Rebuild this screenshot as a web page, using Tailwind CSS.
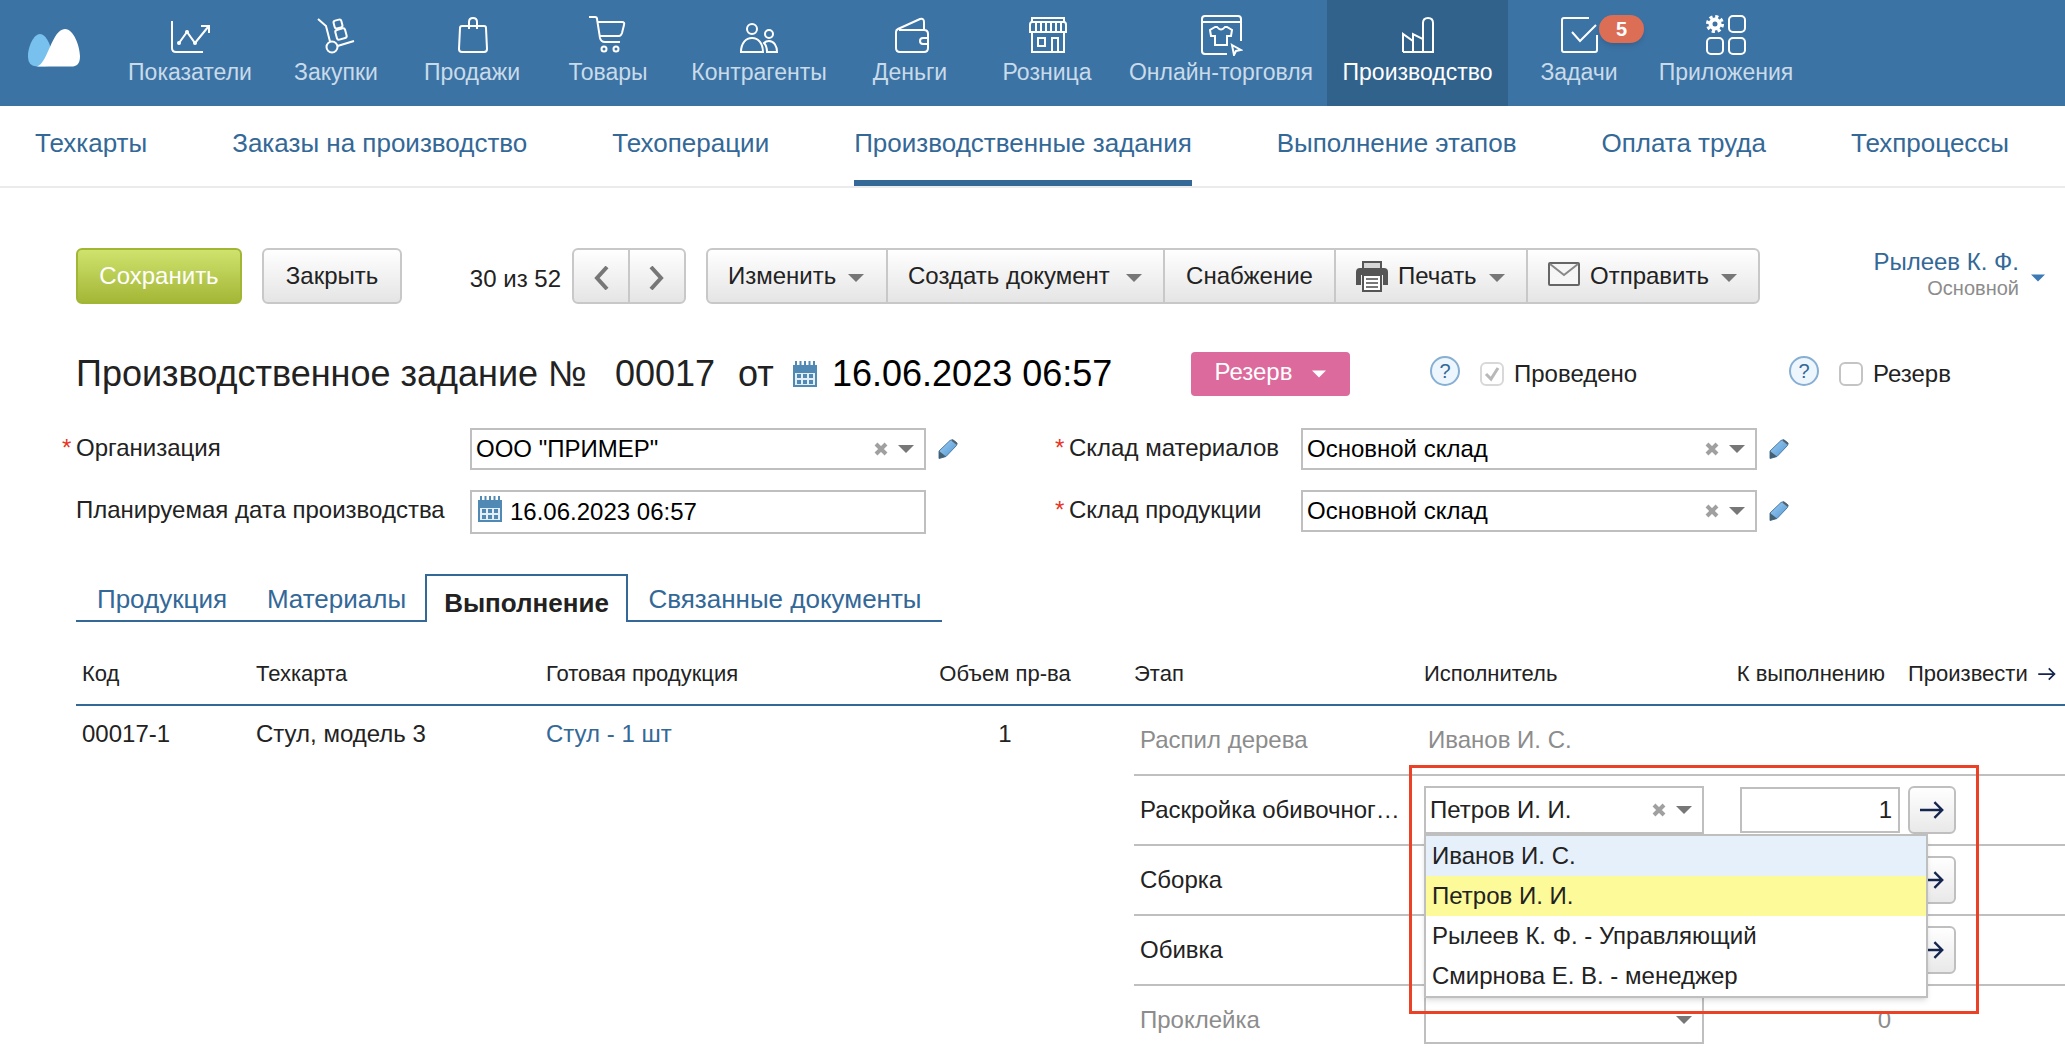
<!DOCTYPE html>
<html lang="ru">
<head>
<meta charset="utf-8">
<meta name="viewport" content="width=device-width, initial-scale=1">
<title>Производственное задание № 00017</title>
<script src="https://cdn.jsdelivr.net/npm/@tailwindcss/browser@4"></script>
</head>
<body class="bg-white font-['Liberation_Sans',Arial,sans-serif] text-2xl leading-7 text-[#222222] overflow-x-hidden">

<svg class="absolute h-0 w-0" aria-hidden="true">
  <defs>
  <linearGradient id="pencil-fill" x1="0" y1="0" x2="1" y2="1"><stop offset="0" stop-color="#9fd0f5"/><stop offset="1" stop-color="#4d92cf"/></linearGradient>
  </defs>
  <symbol id="arrow-down" viewBox="0 0 16 8"><path d="M0 0h16L8 8z" fill="currentColor"/></symbol>
  <symbol id="cross" viewBox="0 0 14 14"><path d="M2 2l10 10M12 2L2 12" stroke="#a0a0a0" stroke-width="4" fill="none"/></symbol>
  <symbol id="calendar" viewBox="0 0 24 26"><path d="M3 0v5M7.500 0v5M12 0v5M16.500 0v5M21 0v5" stroke="#5089b4" stroke-width="2"/><path d="M0 4h24v22H0z" fill="#5089b4"/><path d="M2 12h20v12H2z" fill="#e4eef6"/><path d="M4 13h4v4H4zm6 0h4v4h-4zm6 0h4v4h-4zM4 19h4v4H4zm6 0h4v4h-4zm6 0h4v4h-4z" fill="#5089b4"/></symbol>
  <symbol id="pencil" viewBox="0 0 20 20"><path d="M1 12L12 1.500q1.500-1 3-.5l3.500 2.500q1 1.500 0 3L8 17.500l-7 2z" fill="url(#pencil-fill)" stroke="#4a7ba5" stroke-width="1"/><path d="M1 12l7 5.500-7 2z" fill="#47606f"/><path d="M14 1l5 4" stroke="#55616b" stroke-width="2"/></symbol>
  <symbol id="arrow-right" viewBox="0 0 20 16"><path d="M0 8h18M12 1.500L18.500 8 12 14.500" fill="none" stroke="#14264f" stroke-width="2"/></symbol>
</svg>

<header class="flex h-[106px] items-stretch bg-[#3c73a5] text-[23px] leading-8 text-[#c9dbe9]">
  <a href="#" class="flex w-[113px] items-start pl-7 pt-7" aria-label="Главная">
    <svg class="h-10 w-[52px]" viewBox="0 0 52 40"><path d="M0 29C0 18 6 6 12 6s12 12 12 23-4 9-10 9.500H9Q0 38 0 29z" fill="#78c1ee"/><path d="M9 38.500C20 35 24 1 37 1c9 0 15 18 15 27 0 8-3 10.500-9 10.500z" fill="#fff"/></svg>
  </a>
  <nav class="flex text-center">
    <a href="#" class="flex w-[154px] flex-col items-center pt-3">
      <svg class="h-11 w-11" viewBox="0 0 44 44" fill="none" stroke="#fff" stroke-width="2"><path d="M4 9v27q0 4 4 4h27M11 31l8-11 8 11L40 15M33 14h8v7"/><g fill="#fff" stroke="none"><circle cx="11" cy="31" r="2"/><circle cx="19" cy="20" r="2"/><circle cx="27" cy="31" r="2"/></g></svg>
      Показатели</a>
    <a href="#" class="flex w-[138px] flex-col items-center pt-3">
      <svg class="h-11 w-11" viewBox="0 0 44 44" fill="none" stroke="#fff" stroke-width="2"><path d="M4 7l8 7 4 15.500M23.500 34l16.500-5"/><circle cx="18" cy="35" r="5.500"/><rect x="20" y="8" width="8" height="8" rx="2" transform="rotate(-15 24 12)"/><rect x="22" y="17" width="10" height="10" rx="2" transform="rotate(-15 27 22)"/></svg>
      Закупки</a>
    <a href="#" class="flex w-[134px] flex-col items-center pt-3">
      <svg class="h-11 w-11" viewBox="0 0 44 44" fill="none" stroke="#fff" stroke-width="2"><path d="M12 14h22q2 0 2 2l1 21q0 3-3 3H12q-3 0-3-3l1-21q0-2 2-2zM19 17v-7q0-4 4-4t4 4v7"/></svg>
      Продажи</a>
    <a href="#" class="flex w-[138px] flex-col items-center pt-3">
      <svg class="h-11 w-11" viewBox="0 0 44 44" fill="none" stroke="#fff" stroke-width="2"><path d="M3 5h6q2 0 2 2l3 19q1 4 5 4h15M12 10h24q3 0 2 3l-2 8q-1 3-3 3H14"/><circle cx="18" cy="37" r="2.500"/><circle cx="30" cy="37" r="2.500"/></svg>
      Товары</a>
    <a href="#" class="flex w-[164px] flex-col items-center pt-3">
      <svg class="h-11 w-11" viewBox="0 0 44 44" fill="none" stroke="#fff" stroke-width="2"><circle cx="15" cy="17" r="5"/><circle cx="32" cy="22" r="4"/><path d="M4 40c0-9 5-14 11-14s11 5 11 14zM30 40c0-4-1-7-3-9 1-1 3-2 5-2 5 0 8 5 8 11z"/></svg>
      Контрагенты</a>
    <a href="#" class="flex w-[138px] flex-col items-center pt-3">
      <svg class="h-11 w-11" viewBox="0 0 44 44" fill="none" stroke="#fff" stroke-width="2"><path d="M11 18h25q4 0 4 4v14q0 4-4 4H12q-4 0-4-4V20q0-2 2-3L32 7q4-1 4 3v8M40 26h-5q-3 0-3 3t3 3h5"/></svg>
      Деньги</a>
    <a href="#" class="flex w-[136px] flex-col items-center pt-3">
      <svg class="h-11 w-11" viewBox="0 0 44 44" fill="none" stroke="#fff" stroke-width="2"><path d="M7 10V6h32v4M5 20v-7q0-3 2-3h32q2 0 2 3v7zM7 20v20h32V20M11 10v10M16 10v10M21 10v10M26 10v10M31 10v10M36 10v10M13 26h7v8h-7zM27 40V26h6v14"/></svg>
      Розница</a>
    <a href="#" class="flex w-[212px] flex-col items-center pt-3">
      <svg class="h-11 w-11" viewBox="0 0 44 44" fill="none" stroke="#fff" stroke-width="2"><path d="M28 42H6q-3 0-3-3V7q0-3 3-3h33q3 0 3 3v22M3 10h39M16 15l-5 3 1 6h4v9h12v-9h4l1-6-5-3h-2q-4 5-8 0zM33 33l9 5-5 1-2 4z"/></svg>
      Онлайн-торговля</a>
    <a href="#" class="flex w-[181px] flex-col items-center bg-[#31628c] pt-3 text-white" aria-current="page">
      <svg class="h-11 w-11" viewBox="0 0 44 44" fill="none" stroke="#fff" stroke-width="2"><path d="M7 40V22l10 7v-7l10 5v13M17 40V22M7 40h30V11q0-5-5-5t-5 5v29"/></svg>
      Производство</a>
    <a href="#" class="relative flex w-[142px] flex-col items-center pt-3">
      <svg class="h-11 w-11" viewBox="0 0 44 44" fill="none" stroke="#fff" stroke-width="2"><path d="M32 6H7q-2 0-2 2v30q0 2 2 2h31q2 0 2-2V23M15 20l8 9L39 13"/></svg>
      Задачи
      <span class="absolute left-[91px] top-[15px] flex h-7 w-[45px] items-center justify-center rounded-full bg-[#dd6e56] text-xl font-bold text-white shadow-md">5</span></a>
    <a href="#" class="flex w-[152px] flex-col items-center pt-3">
      <svg class="h-11 w-11" viewBox="0 0 44 44" fill="none" stroke="#fff" stroke-width="2"><rect x="25" y="4" width="16" height="16" rx="4"/><rect x="3" y="26" width="16" height="16" rx="4"/><rect x="25" y="26" width="16" height="16" rx="4"/><circle cx="11" cy="12" r="4.500" stroke-width="4"/><circle cx="11" cy="12" r="7.500" stroke-width="3" stroke-dasharray="3.200 2.690"/></svg>
      Приложения</a>
  </nav>
</header>

<nav class="flex h-[82px] items-stretch gap-[85px] whitespace-nowrap border-b-2 border-[#ebebeb] pl-[35px] text-[26px] leading-8 text-[#336897]">
  <a href="#" class="pt-[21px]">Техкарты</a>
  <a href="#" class="pt-[21px]">Заказы на производство</a>
  <a href="#" class="pt-[21px]">Техоперации</a>
  <a href="#" class="border-b-[6px] border-[#336897] pt-[21px]" aria-current="page">Производственные задания</a>
  <a href="#" class="pt-[21px]">Выполнение этапов</a>
  <a href="#" class="pt-[21px]">Оплата труда</a>
  <a href="#" class="pt-[21px]">Техпроцессы</a>
</nav>

<main class="pl-[76px] pt-[60px]">
  <div class="flex h-14 items-stretch whitespace-nowrap">
    <button class="w-[166px] rounded-md border-2 border-[#a2b636] bg-linear-to-b from-[#cfe26c] to-[#a4b736] text-white">Сохранить</button>
    <button class="ml-5 w-[140px] rounded-md border-2 border-[#c8c8c8] bg-linear-to-b from-white to-[#e5e5e5]">Закрыть</button>
    <span class="flex w-[170px] items-center justify-end pr-[11px] pt-1.5">30 из 52</span>
    <div class="flex w-[114px] rounded-md border-2 border-[#c8c8c8] bg-linear-to-b from-white to-[#e5e5e5]">
      <button class="flex flex-1 items-center justify-center border-r-2 border-[#c8c8c8] pt-1" aria-label="Предыдущий"><svg class="h-6 w-4" viewBox="0 0 16 24" fill="none" stroke="#777" stroke-width="4"><path d="M14 1L4 12l10 11"/></svg></button>
      <button class="flex flex-1 items-center justify-center pt-1" aria-label="Следующий"><svg class="h-6 w-4" viewBox="0 0 16 24" fill="none" stroke="#777" stroke-width="4"><path d="M2 1l10 11L2 23"/></svg></button>
    </div>
    <div class="ml-5 flex rounded-md border-2 border-[#c8c8c8] bg-linear-to-b from-white to-[#e5e5e5]">
      <button class="flex w-[180px] items-center gap-3 border-r-2 border-[#c8c8c8] pl-5">Изменить<svg class="mt-1 h-2.5 w-4 text-[#777]" ><use href="#arrow-down"/></svg></button>
      <button class="flex w-[277px] items-center gap-4 border-r-2 border-[#c8c8c8] pl-5">Создать документ<svg class="mt-1 h-2.5 w-4 text-[#777]"><use href="#arrow-down"/></svg></button>
      <button class="w-[171px] border-r-2 border-[#c8c8c8]">Снабжение</button>
      <button class="flex w-48 items-center gap-2.5 border-r-2 border-[#c8c8c8] pl-5"><svg class="h-8 w-8" viewBox="0 0 32 32"><path d="M7 9V2h18v7" fill="#d6d6d6" stroke="#555" stroke-width="2"/><path d="M4 8h24q4 0 4 4v13h-5V15H5v10H0V12q0-4 4-4z" fill="#555"/><path d="M7 15h18v16H7z" fill="#fff" stroke="#555" stroke-width="2"/><path d="M10 19h12M10 23h12M10 27h12" stroke="#777" stroke-width="2"/></svg>Печать<svg class="ml-0.5 mt-1 h-2.5 w-4 text-[#777]"><use href="#arrow-down"/></svg></button>
      <button class="flex w-[230px] items-center gap-2.5 pl-5"><svg class="-mt-1 h-6 w-8" viewBox="0 0 32 24" fill="#f6f6f6" stroke="#666" stroke-width="2"><rect x="1" y="1" width="30" height="22" rx="1"/><path d="M2 2l14 11L30 2" stroke="#888"/></svg>Отправить<svg class="ml-0.5 mt-1 h-2.5 w-4 text-[#777]"><use href="#arrow-down"/></svg></button>
    </div>
    <button class="ml-auto mr-5 flex items-center gap-3 text-right">
      <span class="pb-1"><span class="block leading-7 text-[#336897]">Рылеев К. Ф.</span><span class="block text-xl leading-6 text-[#8c8c8c]">Основной</span></span>
      <svg class="mt-1 h-2 w-3.5 text-[#3c7ab5]"><use href="#arrow-down"/></svg>
    </button>
  </div>

  <div class="mt-12 flex h-11 items-center whitespace-nowrap">
    <h1 class="flex w-[717px] items-center text-4xl leading-10"><span class="w-[539px]">Производственное задание №</span><span class="w-[123px]">00017</span><span>от</span></h1>
    <svg class="h-[26px] w-6"><use href="#calendar"/></svg>
    <time class="ml-[15px] w-[359px] text-4xl leading-10 text-black">16.06.2023 06:57</time>
    <button class="flex h-11 w-[159px] items-center justify-center gap-5 rounded-sm bg-[#dc6a9c] pb-1 text-white">Резерв<svg class="mt-1 h-2.5 w-3.5"><use href="#arrow-down"/></svg></button>
    <button class="mb-1.5 ml-20 h-[30px] w-[30px] rounded-full border-2 border-[#86afd3] bg-[#eef6fd] text-xl leading-6 text-[#336897]" aria-label="Справка">?</button>
    <label class="ml-5 flex w-[309px] items-center gap-2.5"><input type="checkbox" checked disabled class="h-6 w-6 appearance-none rounded-md border-2 border-[#d8d8d8] bg-white"><svg class="pointer-events-none -ml-[34px] h-6 w-6" viewBox="0 0 24 24" fill="none" stroke="#b8b8b8" stroke-width="3"><path d="M6 12l5 5 7-11"/></svg>Проведено</label>
    <button class="mb-1.5 h-[30px] w-[30px] rounded-full border-2 border-[#86afd3] bg-[#eef6fd] text-xl leading-6 text-[#336897]" aria-label="Справка">?</button>
    <label class="ml-5 flex items-center gap-2.5"><input type="checkbox" class="h-6 w-6 appearance-none rounded-md border-2 border-[#c4c4c4] bg-white">Резерв</label>
  </div>

  <form class="mt-8 flex items-start gap-[98px] whitespace-nowrap">
    <div class="grid grid-cols-[394px_456px_32px] gap-y-5">
      <label for="org" class="relative h-[42px] leading-10"><span class="absolute -left-3.5 top-0 text-[#e8341f]">*</span>Организация</label>
      <div class="flex h-[42px] items-center gap-2.5 border-2 border-[#bfbfbf] pl-1 pr-2.5">
        <input id="org" value='ООО "ПРИМЕР"' class="min-w-0 flex-1 text-black outline-none">
        <button type="button" aria-label="Очистить"><svg class="h-3.5 w-3.5"><use href="#cross"/></svg></button>
        <button type="button" aria-label="Открыть"><svg class="h-2 w-4 text-[#777]"><use href="#arrow-down"/></svg></button>
      </div>
      <button type="button" class="flex items-center pl-3" aria-label="Редактировать"><svg class="h-5 w-5"><use href="#pencil"/></svg></button>
      <label for="plan" class="h-11 leading-10">Планируемая дата производства</label>
      <div class="flex h-11 items-center gap-2 border-2 border-[#bfbfbf] pl-1.5">
        <svg class="-mt-1.5 h-[26px] w-6"><use href="#calendar"/></svg>
        <input id="plan" value="16.06.2023 06:57" class="min-w-0 flex-1 text-black outline-none">
      </div>
    </div>
    <div class="grid grid-cols-[232px_456px_32px] gap-y-5 pl-[13px]">
      <label for="mat" class="relative h-[42px] leading-10"><span class="absolute -left-3.5 top-0 text-[#e8341f]">*</span>Склад материалов</label>
      <div class="flex h-[42px] items-center gap-2.5 border-2 border-[#bfbfbf] pl-1 pr-2.5">
        <input id="mat" value="Основной склад" class="min-w-0 flex-1 text-black outline-none">
        <button type="button" aria-label="Очистить"><svg class="h-3.5 w-3.5"><use href="#cross"/></svg></button>
        <button type="button" aria-label="Открыть"><svg class="h-2 w-4 text-[#777]"><use href="#arrow-down"/></svg></button>
      </div>
      <button type="button" class="flex items-center pl-3" aria-label="Редактировать"><svg class="h-5 w-5"><use href="#pencil"/></svg></button>
      <label for="prod" class="relative h-[42px] leading-10"><span class="absolute -left-3.5 top-0 text-[#e8341f]">*</span>Склад продукции</label>
      <div class="flex h-[42px] items-center gap-2.5 border-2 border-[#bfbfbf] pl-1 pr-2.5">
        <input id="prod" value="Основной склад" class="min-w-0 flex-1 text-black outline-none">
        <button type="button" aria-label="Очистить"><svg class="h-3.5 w-3.5"><use href="#cross"/></svg></button>
        <button type="button" aria-label="Открыть"><svg class="h-2 w-4 text-[#777]"><use href="#arrow-down"/></svg></button>
      </div>
      <button type="button" class="flex items-center pl-3" aria-label="Редактировать"><svg class="h-5 w-5"><use href="#pencil"/></svg></button>
    </div>
  </form>

  <div class="mt-10 flex h-12 items-stretch whitespace-nowrap text-[26px] leading-8 text-[#336897]" role="tablist">
    <button role="tab" class="w-[172px] border-b-2 border-[#336897] pt-1">Продукция</button>
    <button role="tab" class="w-[177px] border-b-2 border-[#336897] pt-1">Материалы</button>
    <button role="tab" aria-selected="true" class="w-[203px] border-x-2 border-t-2 border-[#336897] pt-2 font-bold text-[#222222]">Выполнение</button>
    <button role="tab" class="w-[314px] border-b-2 border-[#336897] pt-1">Связанные документы</button>
  </div>

  <table class="w-full table-fixed border-separate border-spacing-0 whitespace-nowrap">
    <colgroup><col class="w-[174px]"><col class="w-[290px]"><col class="w-[390px]"><col class="w-[204px]"><col class="w-[290px]"><col class="w-[308px]"><col class="w-[170px]"><col></colgroup>
    <thead>
      <tr class="h-[84px] text-left text-[22px] leading-7 *:border-b-2 *:border-[#336897] *:pb-4 *:align-bottom *:font-normal">
        <th class="pl-1.5">Код</th>
        <th class="pl-1.5">Техкарта</th>
        <th class="pl-1.5">Готовая продукция</th>
        <th class="pr-[54px] text-center">Объем пр-ва</th>
        <th>Этап</th>
        <th>Исполнитель</th>
        <th class="text-right"><span class="mr-[17px]">К выполнению</span></th>
        <th><span class="flex items-center gap-2.5 pl-1.5">Произвести<svg class="h-3.5 w-[18px]"><use href="#arrow-right"/></svg></span></th>
      </tr>
    </thead>
    <tbody>
      <tr class="h-[70px]">
        <td rowspan="5" class="pl-1.5 pt-3.5 align-top">00017-1</td>
        <td rowspan="5" class="pl-1.5 pt-3.5 align-top">Стул, модель 3</td>
        <td rowspan="5" class="pl-1.5 pt-3.5 align-top"><a href="#" class="text-[#336897]">Стул - 1 шт</a></td>
        <td rowspan="5" class="pr-[54px] pt-3.5 text-center align-top">1</td>
        <td class="border-b-2 border-[#bfbfbf] pl-1.5 text-[#8c8c8c]">Распил дерева</td>
        <td class="border-b-2 border-[#bfbfbf] pl-1 text-[#8c8c8c]">Иванов И. С.</td>
        <td class="border-b-2 border-[#bfbfbf]"></td>
        <td class="border-b-2 border-[#bfbfbf]"></td>
      </tr>
      <tr class="h-[70px]">
        <td class="border-b-2 border-[#bfbfbf] pl-1.5">Раскройка обивочног…</td>
        <td class="border-b-2 border-[#bfbfbf]">
          <div class="relative w-[280px]">
            <div class="flex h-12 items-center gap-2.5 border-2 border-[#bfbfbf] bg-white pl-1 pr-2.5">
              <input value="Петров И. И." aria-label="Исполнитель" class="min-w-0 flex-1 outline-none">
              <button aria-label="Очистить"><svg class="h-3.5 w-3.5"><use href="#cross"/></svg></button>
              <button aria-label="Открыть"><svg class="h-2 w-4 text-[#777]"><use href="#arrow-down"/></svg></button>
            </div>
            <ul class="absolute left-0 top-12 z-10 w-[504px] border-2 border-[#bfbfbf] bg-white leading-10 shadow-md *:h-10 *:pl-1.5" role="listbox">
              <li role="option" class="bg-[#e5f0fa]">Иванов И. С.</li>
              <li role="option" aria-selected="true" class="bg-[#fdfa9a]">Петров И. И.</li>
              <li role="option">Рылеев К. Ф. - Управляющий</li>
              <li role="option">Смирнова Е. В. - менеджер</li>
            </ul>
            <div class="pointer-events-none absolute -left-[15px] -top-[21px] z-20 h-[249px] w-[570px] border-3 border-[#eb4127]"></div>
          </div>
        </td>
        <td class="border-b-2 border-[#bfbfbf]"><input value="1" aria-label="К выполнению" class="ml-2 block h-[46px] w-40 border-2 border-[#bfbfbf] bg-white pr-1.5 text-right"></td>
        <td class="border-b-2 border-[#bfbfbf]"><button class="ml-1.5 flex h-12 w-12 items-center justify-center rounded-md border-2 border-[#bfbfbf] bg-linear-to-b from-white to-[#e9e9e9]" aria-label="Произвести"><svg class="h-5 w-6"><use href="#arrow-right"/></svg></button></td>
      </tr>
      <tr class="h-[70px]">
        <td class="border-b-2 border-[#bfbfbf] pl-1.5">Сборка</td>
        <td class="border-b-2 border-[#bfbfbf]"></td>
        <td class="border-b-2 border-[#bfbfbf]"></td>
        <td class="border-b-2 border-[#bfbfbf]"><button class="ml-1.5 flex h-12 w-12 items-center justify-center rounded-md border-2 border-[#bfbfbf] bg-linear-to-b from-white to-[#e9e9e9]" aria-label="Произвести"><svg class="h-5 w-6"><use href="#arrow-right"/></svg></button></td>
      </tr>
      <tr class="h-[70px]">
        <td class="border-b-2 border-[#bfbfbf] pl-1.5">Обивка</td>
        <td class="border-b-2 border-[#bfbfbf]"></td>
        <td class="border-b-2 border-[#bfbfbf]"></td>
        <td class="border-b-2 border-[#bfbfbf]"><button class="ml-1.5 flex h-12 w-12 items-center justify-center rounded-md border-2 border-[#bfbfbf] bg-linear-to-b from-white to-[#e9e9e9]" aria-label="Произвести"><svg class="h-5 w-6"><use href="#arrow-right"/></svg></button></td>
      </tr>
      <tr class="h-[68px] text-[#8c8c8c]">
        <td class="pl-1.5">Проклейка</td>
        <td><div class="flex h-12 w-[280px] items-center gap-2.5 border-2 border-[#bfbfbf] pl-1 pr-2.5"><input aria-label="Исполнитель" class="min-w-0 flex-1 outline-none"><button aria-label="Открыть"><svg class="h-2 w-4 text-[#777]"><use href="#arrow-down"/></svg></button></div></td>
        <td class="pr-[11px] text-right">0</td>
        <td></td>
      </tr>
    </tbody>
  </table>
</main>
</body>
</html>
